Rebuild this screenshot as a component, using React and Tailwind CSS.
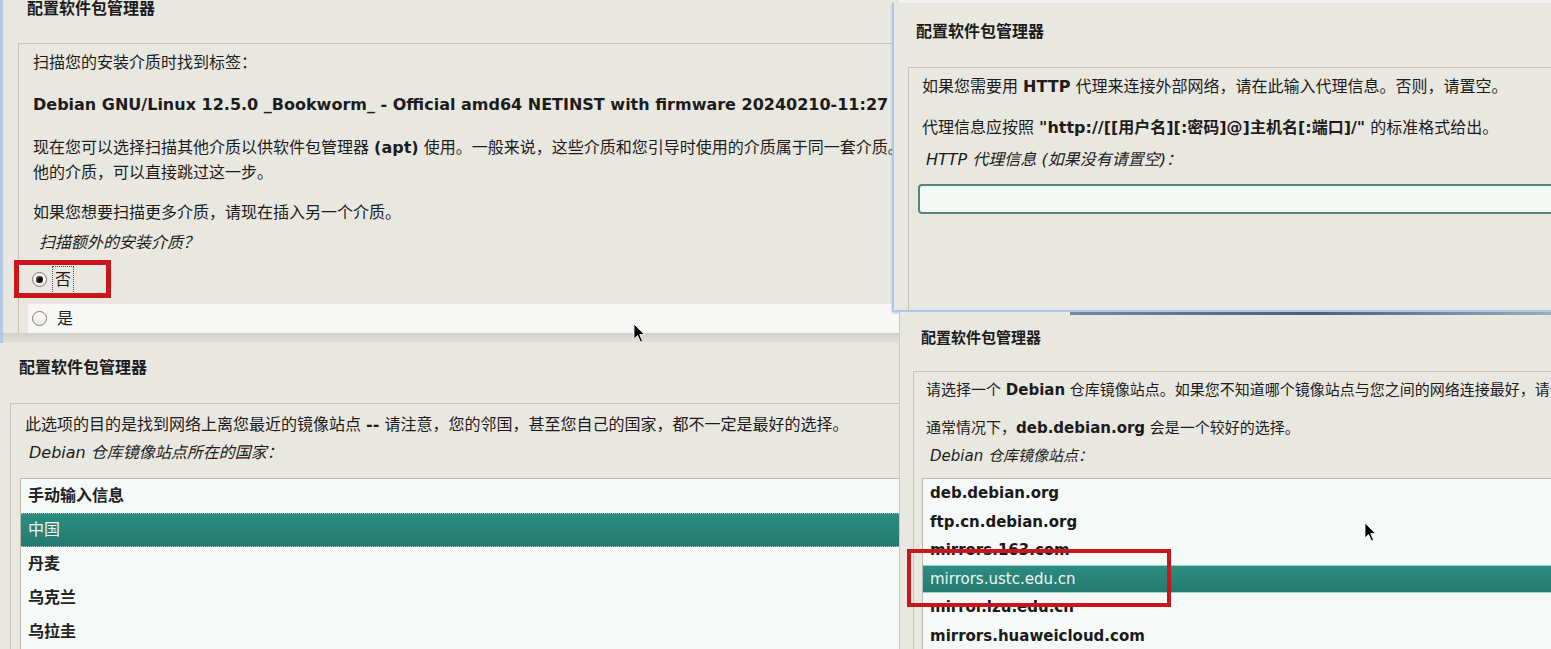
const FONT = "font-['DejaVu_Sans','Noto_Sans_CJK_SC',sans-serif]"

function Cursor({ className }) {
  return (
    <svg className={className} width="13" height="20" viewBox="0 0 13 20">
      <path d="M1 1 L1 16 L4.5 12.5 L7.5 19 L9.5 18 L6.7 11.6 L11.5 11.6 Z" fill="#000" stroke="#fff" strokeWidth="0.8" />
    </svg>
  )
}

function Radio({ checked }) {
  return (
    <span className="w-[15px] h-[15px] rounded-full border border-[#7f7a72] bg-gradient-to-b from-white to-[#ebe9e4] flex items-center justify-center shrink-0">
      {checked && <span className="w-[7px] h-[7px] rounded-full bg-[#111] shadow-[inset_1px_1px_1px_#666]" />}
    </span>
  )
}

const countries = ['手动输入信息', '中国', '丹麦', '乌克兰', '乌拉圭', '乌兹别克斯坦']
const mirrors = [
  'deb.debian.org',
  'ftp.cn.debian.org',
  'mirrors.163.com',
  'mirrors.ustc.edu.cn',
  'mirror.lzu.edu.cn',
  'mirrors.huaweicloud.com',
]

export default function App() {
  return (
    <div className={`relative w-[1551px] h-[649px] overflow-hidden bg-[#f4f4f2] text-[#1c1c1c] ${FONT}`}>
      {/* Window 1: scan media */}
      <div className="absolute left-0 top-0 w-[899px] h-[343px] bg-[#e8e7e0] border-l-[3px] border-[#b3c9e6] flex flex-col overflow-hidden">
        <div className="h-[43px] shrink-0 pl-[24px] text-[16px] leading-[17px] font-bold">配置软件包管理器</div>
        <div className="flex-1 ml-[15px] border-t border-l border-[#c9c3b6] text-[16px] whitespace-nowrap">
          <div className="mt-[7px] pl-[14px] leading-[24px]">扫描您的安装介质时找到标签：</div>
          <div className="mt-[18px] pl-[14px] leading-[24px] font-bold">
            Debian GNU/Linux 12.5.0 _Bookworm_ - Official amd64 NETINST with firmware 20240210-11:27
          </div>
          <div className="mt-[18px] pl-[14px] leading-[25px]">
            <div>现在您可以选择扫描其他介质以供软件包管理器 <b>(apt)</b> 使用。一般来说，这些介质和您引导时使用的介质属于同一套介质。如果您没有其</div>
            <div>他的介质，可以直接跳过这一步。</div>
          </div>
          <div className="mt-[16px] pl-[14px] leading-[24px]">如果您想要扫描更多介质，请现在插入另一个介质。</div>
          <div className="mt-[6px] pl-[20px] leading-[24px] italic">扫描额外的安装介质？</div>
          <div className="mt-[5px] h-[39px] pl-[13px] flex items-center gap-[5px]">
            <Radio checked />
            <span className="px-[2px] h-[28px] flex items-center border border-dotted border-[#555]">否</span>
          </div>
          <div className="mt-[5px] ml-[9px] h-[29px] pl-[4px] bg-[#f7f7f6] flex items-center gap-[10px]">
            <Radio />
            <span>是</span>
          </div>
        </div>
        <div className="h-[10px] shrink-0 bg-gradient-to-b from-[#d2d0c9] to-[#e3e1da]" />
      </div>

      {/* Window 2: http proxy */}
      <div className="absolute left-[892px] top-[3px] w-[659px] h-[309px] bg-[#e8e7e0] border-l-2 border-b-2 border-[#a9c7ef] flex flex-col overflow-hidden shadow-[0_1px_2px_rgba(80,120,180,0.4)]">
        <div className="h-[64px] shrink-0 pt-[21px] pl-[22px] text-[16px] leading-[16px] font-bold">配置软件包管理器</div>
        <div className="flex-1 ml-[14px] border-t border-l border-[#c9c3b6] text-[16px] whitespace-nowrap">
          <div className="mt-[7px] pl-[13px] leading-[24px]">
            如果您需要用 <b>HTTP</b> 代理来连接外部网络，请在此输入代理信息。否则，请置空。
          </div>
          <div className="mt-[17px] pl-[13px] leading-[24px]">
            代理信息应按照 <b>"http://[[用户名][:密码]@]主机名[:端口]/"</b> 的标准格式给出。
          </div>
          <div className="mt-[8px] pl-[17px] leading-[24px] italic">HTTP 代理信息 (如果没有请置空)：</div>
          <div className="mt-[12px] ml-[9px] w-[700px] h-[30px] rounded-[4px] border-2 border-[#54867a] bg-[#f4f9f5]" />
        </div>
      </div>

      {/* Window 3: mirror country */}
      <div className="absolute left-0 top-[343px] w-[899px] h-[306px] bg-[#e8e7e0] flex flex-col overflow-hidden">
        <div className="h-[60px] shrink-0 pt-[17px] pl-[19px] text-[16px] leading-[16px] font-bold">配置软件包管理器</div>
        <div className="flex-1 ml-[10px] border-t border-l border-[#c9c3b6] text-[16px] whitespace-nowrap">
          <div className="mt-[9px] pl-[14px] leading-[24px]">
            此选项的目的是找到网络上离您最近的镜像站点 <b>--</b> 请注意，您的邻国，甚至您自己的国家，都不一定是最好的选择。
          </div>
          <div className="mt-[4px] pl-[18px] leading-[24px] italic">Debian 仓库镜像站点所在的国家：</div>
          <div className="mt-[13px] ml-[9px] w-[880px] border border-[#bdb8ad] bg-[#f5f9f7]">
            {countries.map((c) => (
              <div
                key={c}
                className={
                  c === '中国'
                    ? 'h-[34px] pl-[7px] flex items-center border-y border-dotted border-[#9fd0c7] bg-gradient-to-b from-[#2b8d81] to-[#257a70] text-[#eef7f4]'
                    : 'h-[34px] pl-[7px] flex items-center font-bold text-[#222]'
                }
              >
                {c}
              </div>
            ))}
          </div>
        </div>
      </div>

      {/* Window 4: mirror host */}
      <div className="absolute left-[899px] top-[312px] w-[652px] h-[337px] bg-[#e8e7e0] border-l border-[#cdcac2] flex flex-col overflow-hidden">
        <div className="h-[3px] shrink-0 ml-[170px] bg-gradient-to-r from-[#7d8898] via-[#4d5d76] to-[#a3abb5]" />
        <div className="h-[56px] shrink-0 pt-[16px] pl-[21px] text-[15px] leading-[15px] font-bold">配置软件包管理器</div>
        <div className="flex-1 ml-[13px] border-t border-l border-[#c9c3b6] text-[15px] whitespace-nowrap">
          <div className="mt-[6px] pl-[12px] leading-[24px]">
            请选择一个 <b>Debian</b> 仓库镜像站点。如果您不知道哪个镜像站点与您之间的网络连接最好，请使用您所在国家或地区中的镜像站点。
          </div>
          <div className="mt-[14px] pl-[12px] leading-[24px]">
            通常情况下，<b>deb.debian.org</b> 会是一个较好的选择。
          </div>
          <div className="mt-[4px] pl-[16px] leading-[24px] italic">Debian 仓库镜像站点：</div>
          <div className="mt-[10px] ml-[8px] w-[700px] border border-[#bdb8ad] bg-[#f5f9f7]">
            {mirrors.map((m) => (
              <div
                key={m}
                className={
                  m === 'mirrors.ustc.edu.cn'
                    ? 'h-[28.6px] pl-[7px] flex items-center border-y border-[#9fd0c7] bg-gradient-to-b from-[#2b8d81] to-[#257a70] text-[#eef7f4]'
                    : 'h-[28.6px] pl-[7px] flex items-center font-bold text-[#1a1a1a]'
                }
              >
                {m}
              </div>
            ))}
          </div>
        </div>
      </div>

      {/* highlight boxes */}
      <div className="absolute left-[14px] top-[260px] w-[97px] h-[38px] border-[5px] border-[#c8161b]" />
      <div className="absolute left-[907px] top-[549px] w-[264px] h-[58px] border-[4px] border-[#c8161b]" />

      <Cursor className="absolute left-[633px] top-[323px]" />
      <Cursor className="absolute left-[1364px] top-[522px]" />
    </div>
  )
}
